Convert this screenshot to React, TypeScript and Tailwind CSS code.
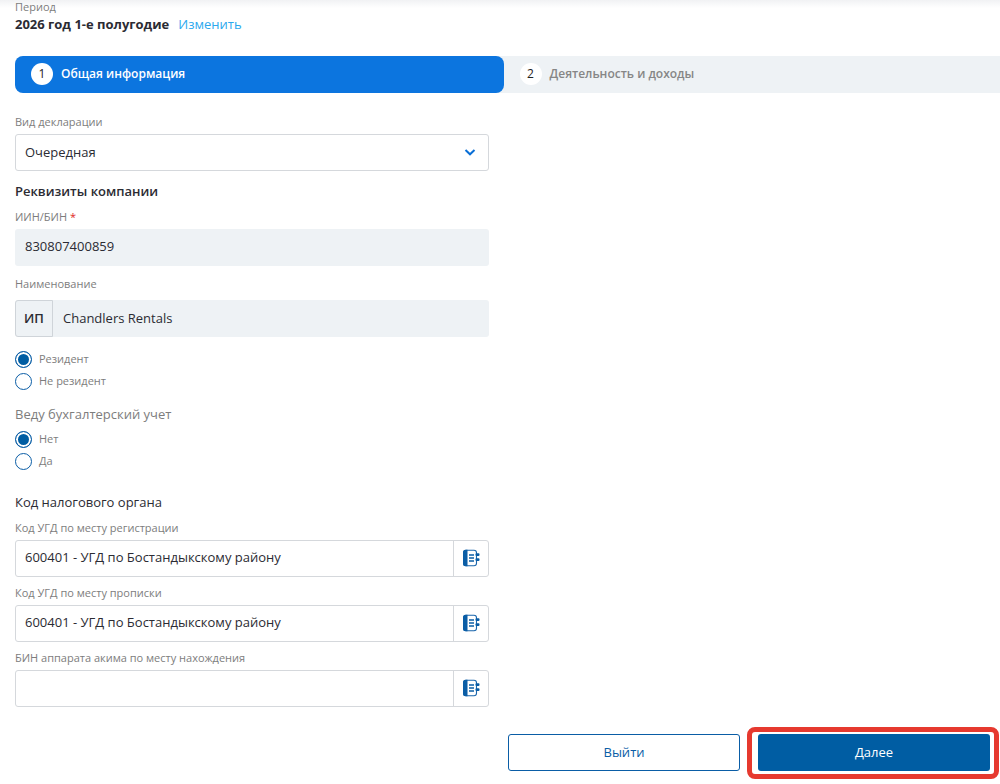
import { useState, type ReactNode } from "react";

const labelStyle = "block text-[11px] leading-4 text-[#7d7d7d]";

function ChevronIcon() {
  return (
    <svg
      className="pointer-events-none absolute top-[13px] right-[13px] h-[10px] w-[12px]"
      viewBox="0 0 12 10"
      fill="none"
      stroke="#0a6fd6"
      strokeWidth="2"
      aria-hidden="true"
    >
      <path d="M1.500 3 6 7.300 10.500 3" />
    </svg>
  );
}

function BookIcon() {
  return (
    <svg className="h-[18px] w-[18px]" viewBox="0 0 18 18" aria-hidden="true">
      <rect x="1.700" y="1.200" width="12.800" height="15.600" rx="2.500" fill="#fff" stroke="#1a66ac" strokeWidth="1.100" />
      <path d="M3.500.8H5.500v16.400h-2A2.500 2.500 0 0 1 1 14.700V3.300A2.500 2.500 0 0 1 3.500.8Z" fill="#0a5da6" />
      <path d="M7 6h5M7 9h5M7 12h5" stroke="#0a5da6" strokeWidth="1.300" />
      <rect x="13.500" y="4.300" width="4" height="2.600" rx="1" fill="#0a5da6" />
      <rect x="13.500" y="9.300" width="4" height="2.600" rx="1" fill="#0a5da6" />
    </svg>
  );
}

function Step({ number, active, children }: { number: number; active?: boolean; children: ReactNode }) {
  return (
    <li
      aria-current={active ? "step" : undefined}
      className={
        active
          ? "flex basis-[49.6%] items-center gap-2 rounded-[8px] bg-[#0c75df] pb-[2px] pl-4 text-white"
          : "flex flex-1 items-center gap-2 pb-[2px] pl-4 text-[#868686]"
      }
    >
      <span className="flex size-[22px] items-center justify-center rounded-full bg-white text-[12px] font-normal text-[#222]">
        {number}
      </span>
      <span>{children}</span>
    </li>
  );
}

function Radio({
  name,
  checked,
  onSelect,
  children,
}: {
  name: string;
  checked: boolean;
  onSelect: () => void;
  children: ReactNode;
}) {
  return (
    <label className="flex h-[22px] items-center gap-[7px] text-[11px] text-[#7d7d7d]">
      <input
        type="radio"
        name={name}
        checked={checked}
        onChange={onSelect}
        className="size-[17px] appearance-none rounded-full border border-[#0a5da6] bg-white checked:bg-[#005da3] checked:shadow-[inset_0_0_0_2px_white]"
      />
      {children}
    </label>
  );
}

function CodeField({ id, label, initial }: { id: string; label: string; initial: string }) {
  return (
    <div className="mt-2">
      <label htmlFor={id} className={labelStyle}>
        {label}
      </label>
      <div className="mt-1 flex h-[37px] rounded-[3px] border border-[#d5d8dc]">
        <input id={id} defaultValue={initial} className="min-w-0 flex-1 rounded-l-[3px] px-[9px] pb-1 text-[13px]" />
        <button
          type="button"
          aria-label="Справочник"
          className="flex w-[35px] items-center justify-center border-l border-[#d5d8dc] pb-[2px]"
        >
          <BookIcon />
        </button>
      </div>
    </div>
  );
}

export default function App() {
  const [resident, setResident] = useState(true);
  const [accounting, setAccounting] = useState(false);

  return (
    <main className="relative min-h-screen bg-white pb-3 font-['Open_Sans','Noto_Sans',sans-serif] text-[13px] leading-5 text-[#2b2b33]">
      <div className="absolute inset-x-0 top-0 h-2 bg-linear-to-b from-[#f1f2f4] to-white" />
      <header className="relative pl-[15px]">
        <p className="text-[11px] leading-[14px] text-[#7d7d7d]">Период</p>
        <div className="flex gap-[9px]">
          <strong className="font-bold">2026 год 1-е полугодие</strong>
          <a href="#period" className="text-[#2ba8ee]">
            Изменить
          </a>
        </div>
      </header>

      <ol className="mt-[22px] ml-[15px] flex h-[37px] rounded-l-[8px] bg-[#eef2f5] text-[12px] font-semibold">
        <Step number={1} active>
          Общая информация
        </Step>
        <Step number={2}>Деятельность и доходы</Step>
      </ol>

      <form onSubmit={(event) => event.preventDefault()}>
        <div className="mt-[21px] w-1/2 pr-[11px] pl-[15px]">
          <label htmlFor="kind" className={labelStyle}>
            Вид декларации
          </label>
          <div className="relative mt-1">
            <select
              id="kind"
              className="block h-[37px] w-full appearance-none rounded-[3px] border border-[#d5d8dc] bg-white px-[9px] pb-[2px] text-[13px]"
            >
              <option>Очередная</option>
            </select>
            <ChevronIcon />
          </div>

          <h2 className="mt-[10px] font-semibold">Реквизиты компании</h2>
          <label htmlFor="bin" className="mt-2 block text-[11px] leading-4 text-[#7d7d7d]">
            ИИН/БИН <span className="text-[#e0281c]">*</span>
          </label>
          <input
            id="bin"
            readOnly
            value="830807400859"
            className="mt-1 block h-[37px] w-full rounded-[3px] bg-[#eef2f5] px-[10px] pb-1 text-[13px]"
          />

          <label htmlFor="name" className="mt-[10px] block text-[11px] leading-4 text-[#7d7d7d]">
            Наименование
          </label>
          <div className="mt-2 flex h-[37px] rounded-[3px] bg-[#eef2f5]">
            <span className="flex w-[38px] items-center justify-center rounded-l-[3px] border border-[#cfd4d9] pb-[2px] font-semibold">
              ИП
            </span>
            <input
              id="name"
              readOnly
              value="Chandlers Rentals"
              className="min-w-0 flex-1 rounded-r-[3px] bg-transparent px-[10px] pb-[2px] text-[13px]"
            />
          </div>

          <fieldset className="mt-[11px]">
            <Radio name="residency" checked={resident} onSelect={() => setResident(true)}>
              Резидент
            </Radio>
            <Radio name="residency" checked={!resident} onSelect={() => setResident(false)}>
              Не резидент
            </Radio>
          </fieldset>

          <fieldset className="mt-3">
            <legend className="mb-1 text-[#7d7d7d]">Веду бухгалтерский учет</legend>
            <Radio name="accounting" checked={!accounting} onSelect={() => setAccounting(false)}>
              Нет
            </Radio>
            <Radio name="accounting" checked={accounting} onSelect={() => setAccounting(true)}>
              Да
            </Radio>
          </fieldset>

          <h2 className="mt-5">Код налогового органа</h2>
          <CodeField id="registration" label="Код УГД по месту регистрации" initial="600401 - УГД по Бостандыкскому району" />
          <CodeField id="residence" label="Код УГД по месту прописки" initial="600401 - УГД по Бостандыкскому району" />
          <CodeField id="akim" label="БИН аппарата акима по месту нахождения" initial="" />
        </div>

        <div className="mt-[27px] ml-auto grid w-1/2 grid-cols-2 gap-[18px] pr-[10px] pl-2">
          <button type="button" className="h-[37px] rounded-[3px] border border-[#0a5da6] pb-[2px] text-[#0a5da6]">
            Выйти
          </button>
          <div className="relative">
            <button type="submit" className="h-[37px] w-full rounded-[3px] bg-[#005da3] pb-[2px] text-white">
              Далее
            </button>
            <div className="pointer-events-none absolute -top-[7px] -right-[9px] -bottom-2 -left-[11px] rounded-[8px] border-5 border-[#e6392f]" />
          </div>
        </div>
      </form>
    </main>
  );
}
